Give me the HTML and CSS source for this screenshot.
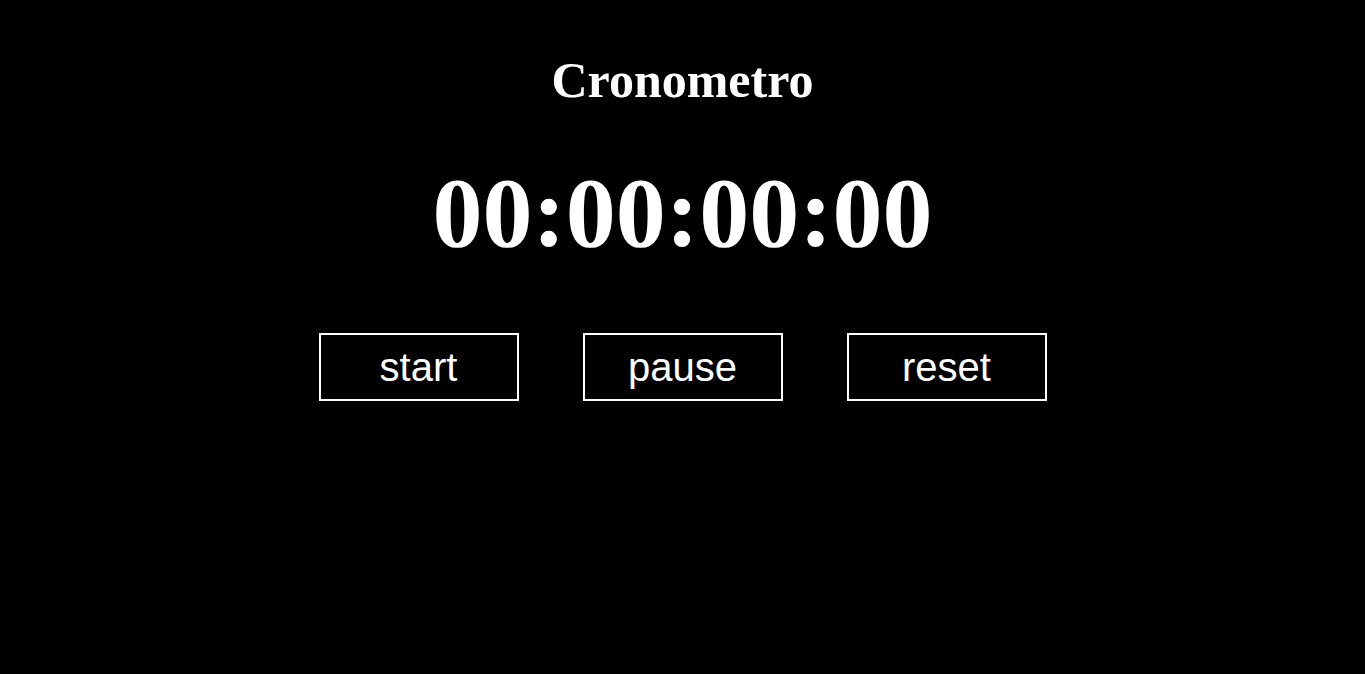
FILE: index.html
```html
<!DOCTYPE html>
<html lang="it">
<head>
<meta charset="utf-8">
<title>Cronometro</title>
<link rel="stylesheet" href="styles.css">
</head>
<body>
<main class="app">
  <h1 class="title">Cronometro</h1>
  <div class="display">00:00:00:00</div>
  <div class="controls">
    <button class="btn">start</button>
    <button class="btn">pause</button>
    <button class="btn">reset</button>
  </div>
</main>
</body>
</html>
```

FILE: styles.css
```css
html, body {
  margin: 0;
  padding: 0;
  background: #000;
  color: #fff;
}
body {
  min-height: 674px;
  font-family: "Liberation Serif", "Times New Roman", serif;
}
.app {
  display: flex;
  flex-direction: column;
  align-items: center;
  padding-top: 51px;
}
.title {
  margin: 0;
  font-size: 50px;
  font-weight: bold;
  line-height: normal;
}
.display {
  margin-top: 46px;
  font-size: 100px;
  font-weight: bold;
  line-height: normal;
}
.controls {
  margin-top: 63px;
  display: flex;
  gap: 64px;
}
.btn {
  width: 200px;
  height: 68px;
  background: #000;
  color: #fff;
  border: 2px solid #fff;
  font-family: "Liberation Sans", Arial, sans-serif;
  font-size: 40px;
  padding: 0;
  line-height: normal;
}
```
